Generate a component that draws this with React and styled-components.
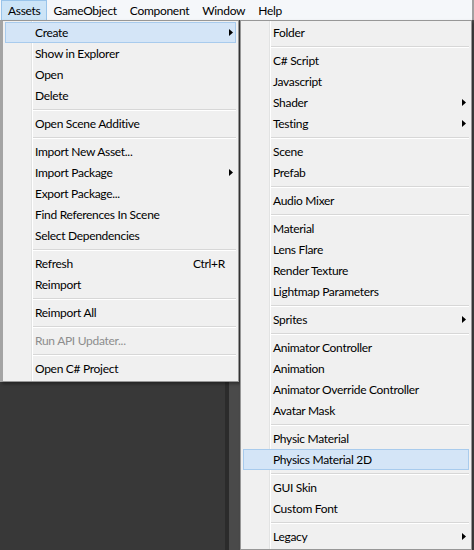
import React from "react";
import styled, { createGlobalStyle } from "styled-components";

const GlobalStyle = createGlobalStyle`
  html, body {
    margin: 0;
    padding: 0;
    background: #383838;
  }
  body {
    font-family: Lato, "Noto Sans", "Liberation Sans", sans-serif;
    font-size: 12px;
    letter-spacing: -0.3px;
    color: #000;
  }
`;

const topItems = ["Assets", "GameObject", "Component", "Window", "Help"];

const assetsMenu = [
  { label: "Create", sub: true, active: true },
  { label: "Show in Explorer" },
  { label: "Open" },
  { label: "Delete" },
  "-",
  { label: "Open Scene Additive" },
  "-",
  { label: "Import New Asset..." },
  { label: "Import Package", sub: true },
  { label: "Export Package..." },
  { label: "Find References In Scene" },
  { label: "Select Dependencies" },
  "-",
  { label: "Refresh", shortcut: "Ctrl+R" },
  { label: "Reimport" },
  "-",
  { label: "Reimport All" },
  "-",
  { label: "Run API Updater...", disabled: true },
  "-",
  { label: "Open C# Project" },
];

const createMenu = [
  { label: "Folder" },
  "-",
  { label: "C# Script" },
  { label: "Javascript" },
  { label: "Shader", sub: true },
  { label: "Testing", sub: true },
  "-",
  { label: "Scene" },
  { label: "Prefab" },
  "-",
  { label: "Audio Mixer" },
  "-",
  { label: "Material" },
  { label: "Lens Flare" },
  { label: "Render Texture" },
  { label: "Lightmap Parameters" },
  "-",
  { label: "Sprites", sub: true },
  "-",
  { label: "Animator Controller" },
  { label: "Animation" },
  { label: "Animator Override Controller" },
  { label: "Avatar Mask" },
  "-",
  { label: "Physic Material" },
  { label: "Physics Material 2D", active: true },
  "-",
  { label: "GUI Skin" },
  { label: "Custom Font" },
  "-",
  { label: "Legacy", sub: true },
];

const Arrow = () => (
  <svg width="4" height="7" viewBox="0 0 4 7">
    <path d="M0 0 L4 3.5 L0 7 Z" fill="#000" />
  </svg>
);

const MenuList = ({ items }) => (
  <>
    {items.map((it, i) =>
      it === "-" ? (
        <Separator key={i} />
      ) : (
        <Item key={i} $active={it.active} $disabled={it.disabled}>
          <span>{it.label}</span>
          {it.shortcut && <Shortcut>{it.shortcut}</Shortcut>}
          <ArrowCell>{it.sub && <Arrow />}</ArrowCell>
        </Item>
      )
    )}
  </>
);

const App = () => {
  return (
    <Screen>
      <GlobalStyle />
      <MenuBar>
        {topItems.map((t, i) => (
          <TopItem key={t} $open={i === 0}>
            {t}
          </TopItem>
        ))}
      </MenuBar>
      <Workspace>
        <SceneView />
        <Divider />
        <SidePanel />
        <Dropdown $left={0} $width={239} $edge>
          <MenuList items={assetsMenu} />
        </Dropdown>
        <Dropdown $left={240} $width={232}>
          <MenuList items={createMenu} />
        </Dropdown>
      </Workspace>
    </Screen>
  );
};
export default App;

const Screen = styled.div`
  width: 474px;
  height: 550px;
  overflow: hidden;
  display: flex;
  flex-direction: column;
`;

const MenuBar = styled.div`
  height: 20px;
  flex-shrink: 0;
  display: flex;
  align-items: stretch;
  background: #f5f7fa;
  padding-left: 1px;
  border-right: 2px solid #a0a0a0;
`;

const TopItem = styled.div`
  display: flex;
  align-items: center;
  padding: 0 5px 0 6px;
  box-sizing: border-box;
  border: 1px solid ${(p) => (p.$open ? "#99c4ea" : "transparent")};
  border-bottom: none;
  background: ${(p) => (p.$open ? "#cce4f7" : "transparent")};
`;

const Workspace = styled.div`
  flex: 1;
  position: relative;
  display: flex;
  background: #383838;
`;

const SceneView = styled.div`
  width: 225px;
  background: #383838;
`;

const Divider = styled.div`
  width: 4px;
  background: #2b2b2b;
`;

const SidePanel = styled.div`
  flex: 1;
  background: #4a4a4a;
`;

const Dropdown = styled.div`
  position: absolute;
  top: 0;
  left: ${(p) => p.$left}px;
  width: ${(p) => p.$width}px;
  box-sizing: border-box;
  padding: 1px 2px 2px;
  background: #f0f0f0 linear-gradient(to right, transparent 28px, #e2e3e3 28px, #e2e3e3 29px, #fff 29px, #fff 30px, transparent 30px);
  border: 1px solid #979797;
  border-left: ${(p) => (p.$edge ? "3px solid #a4a4a4" : "1px solid #979797")};
  box-shadow: 2px 2px 3px rgba(0, 0, 0, 0.35);
`;

const Item = styled.div`
  height: 21px;
  box-sizing: border-box;
  display: flex;
  align-items: center;
  padding-left: 29px;
  color: ${(p) => (p.$disabled ? "#8d8d8d" : "#000")};
  border: 1px solid ${(p) => (p.$active ? "#a8cbed" : "transparent")};
  background: ${(p) => (p.$active ? "#d4e5f7" : "transparent")};
  span {
    flex: 1;
    white-space: nowrap;
  }
`;

const Shortcut = styled.div`
  margin-right: 4px;
`;

const ArrowCell = styled.div`
  width: 6px;
  display: flex;
  align-items: center;
  justify-content: flex-start;
`;

const Separator = styled.div`
  height: 7px;
  margin-left: 28px;
  display: flex;
  flex-direction: column;
  justify-content: center;
  &::before {
    content: "";
    height: 1px;
    background: #d7d7d7;
  }
  &::after {
    content: "";
    height: 1px;
    background: #fff;
  }
`;
